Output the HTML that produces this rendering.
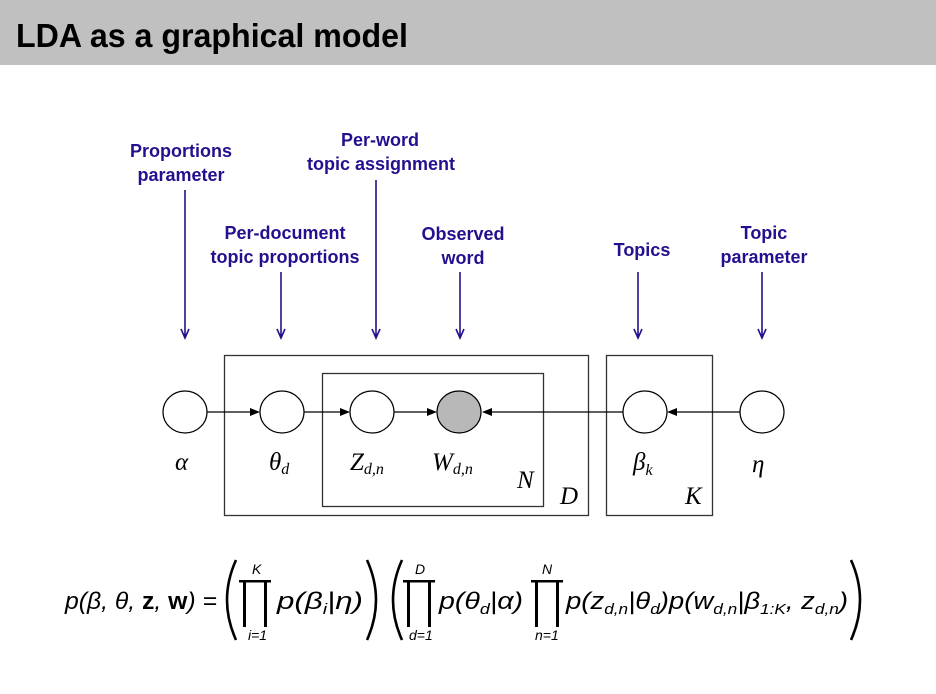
<!DOCTYPE html>
<html><head><meta charset="utf-8"><style>
html,body{margin:0;padding:0;background:#fff;}
svg{display:block;}
.lb{font-family:"Liberation Sans",sans-serif;font-weight:bold;font-size:18px;fill:#24108f;text-anchor:middle;}
.sy{font-family:"Liberation Serif",serif;font-style:italic;font-size:25px;fill:#000;}
.sb{font-family:"Liberation Serif",serif;font-style:italic;font-size:16px;fill:#000;}
.f{font-family:"Liberation Sans",sans-serif;font-style:italic;font-size:24px;fill:#000;}
.fs{font-family:"Liberation Sans",sans-serif;font-style:italic;font-size:14px;fill:#000;}
</style></head><body>
<svg width="936" height="694" viewBox="0 0 936 694" xmlns="http://www.w3.org/2000/svg">
<rect x="0" y="0" width="936" height="65" fill="#c0c0c0"/>
<text x="16" y="47" font-family="Liberation Sans,sans-serif" font-weight="bold" font-size="33" textLength="392" lengthAdjust="spacingAndGlyphs">LDA as a graphical model</text>

<text class="lb" x="181" y="157">Proportions</text><text class="lb" x="181" y="181">parameter</text>
<text class="lb" x="380" y="146">Per-word</text><text class="lb" x="381" y="170">topic assignment</text>
<text class="lb" x="285" y="239">Per-document</text><text class="lb" x="285" y="263">topic proportions</text>
<text class="lb" x="463" y="240">Observed</text><text class="lb" x="463" y="264">word</text>
<text class="lb" x="642" y="256">Topics</text>
<text class="lb" x="764" y="239">Topic</text><text class="lb" x="764" y="263">parameter</text>
<g stroke="#24108f" stroke-width="1.6" fill="none">
<path d="M185 190V337M181 329L185 338L189 329"/>
<path d="M281 272V337M277 329L281 338L285 329"/>
<path d="M376 180V337M372 329L376 338L380 329"/>
<path d="M460 272V337M456 329L460 338L464 329"/>
<path d="M638 272V337M634 329L638 338L642 329"/>
<path d="M762 272V337M758 329L762 338L766 329"/>
</g>

<g fill="none" stroke="#333" stroke-width="1.3">
<rect x="224.5" y="355.5" width="364" height="160"/>
<rect x="322.5" y="373.5" width="221" height="133"/>
<rect x="606.5" y="355.5" width="106" height="160"/>
</g>
<g stroke="#000" stroke-width="1.2">
<line x1="207" y1="412" x2="252" y2="412"/>
<line x1="304" y1="412" x2="343" y2="412"/>
<line x1="394" y1="412" x2="430" y2="412"/>
<line x1="623" y1="412" x2="488" y2="412"/>
<line x1="740" y1="412" x2="674" y2="412"/>
</g>
<g fill="#000">
<path d="M250 408L260 412L250 416Z"/>
<path d="M340 408L350 412L340 416Z"/>
<path d="M427 408L437 412L427 416Z"/>
<path d="M492 408L482 412L492 416Z"/>
<path d="M677 408L667 412L677 416Z"/>
</g>
<g stroke="#000" stroke-width="1.2" fill="#fff">
<ellipse cx="185" cy="412" rx="22" ry="21"/>
<ellipse cx="282" cy="412" rx="22" ry="21"/>
<ellipse cx="372" cy="412" rx="22" ry="21"/>
<ellipse cx="459" cy="412" rx="22" ry="21" fill="#b8b8b8"/>
<ellipse cx="645" cy="412" rx="22" ry="21"/>
<ellipse cx="762" cy="412" rx="22" ry="21"/>
</g>
<text class="sy" x="175" y="470">α</text>
<text class="sy" x="269" y="470">θ<tspan font-size="16" dy="4">d</tspan></text>
<text class="sy" x="350" y="470">Z<tspan font-size="16" dy="4">d,n</tspan></text>
<text class="sy" x="432" y="470">W<tspan font-size="16" dy="4">d,n</tspan></text>
<text class="sy" x="517" y="488">N</text>
<text class="sy" x="560" y="504">D</text>
<text class="sy" x="633" y="470">β<tspan font-size="16" dy="5">k</tspan></text>
<text class="sy" x="685" y="504">K</text>
<text class="sy" x="752" y="472">η</text>

<text class="f" x="65" y="609" textLength="152" lengthAdjust="spacingAndGlyphs">p(β, θ, <tspan font-weight="bold" font-style="normal">z</tspan>, <tspan font-weight="bold" font-style="normal">w</tspan>) =</text>
<g fill="none" stroke="#000" stroke-width="2.6">
<path d="M236 560Q218 600 236 640"/>
<path d="M367 560Q385 600 367 640"/>
<path d="M402 560Q384 600 402 640"/>
<path d="M851 560Q869 600 851 640"/>
</g>
<g fill="#000">
<rect x="239" y="580" width="32" height="2.5"/><rect x="243" y="580" width="3" height="47"/><rect x="264" y="580" width="3" height="47"/>
<rect x="403" y="580" width="32" height="2.5"/><rect x="407" y="580" width="3" height="47"/><rect x="428" y="580" width="3" height="47"/>
<rect x="531" y="580" width="32" height="2.5"/><rect x="535" y="580" width="3" height="47"/><rect x="556" y="580" width="3" height="47"/>
</g>
<text class="fs" x="252" y="574">K</text><text class="fs" x="248" y="640">i=1</text>
<text class="fs" x="415" y="574">D</text><text class="fs" x="409" y="640">d=1</text>
<text class="fs" x="542" y="574">N</text><text class="fs" x="535" y="640">n=1</text>
<text class="f" x="277" y="609" textLength="86" lengthAdjust="spacingAndGlyphs">p(β<tspan font-size="15" dy="5">i</tspan><tspan dy="-5">|η)</tspan></text>
<text class="f" x="439" y="609" textLength="84" lengthAdjust="spacingAndGlyphs">p(θ<tspan font-size="15" dy="5">d</tspan><tspan dy="-5">|α)</tspan></text>
<text class="f" x="566" y="609" textLength="282" lengthAdjust="spacingAndGlyphs">p(z<tspan font-size="15" dy="5">d,n</tspan><tspan dy="-5">|θ</tspan><tspan font-size="15" dy="5">d</tspan><tspan dy="-5">)p(w</tspan><tspan font-size="15" dy="5">d,n</tspan><tspan dy="-5">|β</tspan><tspan font-size="15" dy="5">1:K</tspan><tspan dy="-5">, z</tspan><tspan font-size="15" dy="5">d,n</tspan><tspan dy="-5">)</tspan></text>
</svg>
</body></html>
